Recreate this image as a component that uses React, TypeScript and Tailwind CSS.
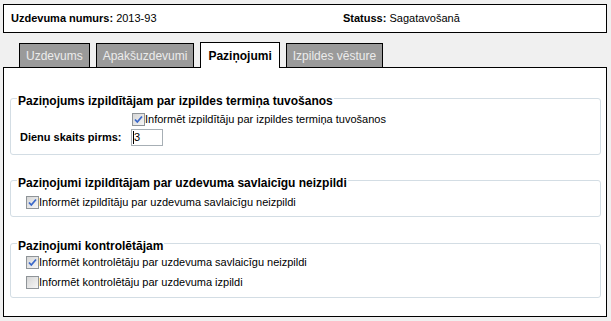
import React from "react";

const Checkbox = ({ checked }: { checked: boolean }) => (
  <span className="inline-flex w-[13px] h-[13px] shrink-0 border border-[#8f9498] bg-gradient-to-br from-[#d6d6d6] to-[#f6f6f6] items-center justify-center">
    {checked && (
      <svg width="11" height="11" viewBox="0 0 11 11">
        <path d="M2 5.5 L4.3 8 L9 2.5" fill="none" stroke="#3b68c9" strokeWidth="1.8" />
      </svg>
    )}
  </span>
);

const Row = ({ checked, text, className = "" }: { checked: boolean; text: string; className?: string }) => (
  <div className={`flex items-center h-[16px] ${className}`}>
    <Checkbox checked={checked} />
    <span className="text-[11px] leading-[13px] text-black">{text}</span>
  </div>
);

const Legend = ({ text }: { text: string }) => (
  <div className="-mt-[5px] ml-[-3px] w-fit bg-white px-[1px] text-[12px] leading-[14px] font-bold text-black">
    {text}
  </div>
);

export default function App() {
  return (
    <div
      className="w-[611px] h-[321px] bg-[#f0f0f0] pt-[4px] px-[3px] overflow-hidden"
      style={{ fontFamily: '"Liberation Sans", Arial, sans-serif' }}
    >
      <div className="h-[29px] w-[604px] border border-black bg-white flex items-center pl-[7px] text-[11px] text-black">
        <div className="w-[332px]">
          <span className="font-bold">Uzdevuma numurs:</span> 2013-93
        </div>
        <div>
          <span className="font-bold">Statuss:</span> Sagatavošanā
        </div>
      </div>

      <div className="h-[34px] flex items-end pl-[16px] gap-[6px]">
        <div className="h-[24px] border border-b-0 border-black bg-[#9a9a9a] px-[6px] flex items-center text-[12px] text-[#ececec]">
          Uzdevums
        </div>
        <div className="h-[24px] border border-b-0 border-black bg-[#9a9a9a] px-[6px] flex items-center text-[12px] text-[#ececec]">
          Apakšuzdevumi
        </div>
        <div className="relative z-10 h-[26px] -mb-[1px] border border-b-0 border-black bg-white px-[7px] flex items-center text-[12px] font-bold text-black">
          Paziņojumi
        </div>
        <div className="h-[24px] border border-b-0 border-black bg-[#9a9a9a] px-[6px] flex items-center text-[12px] text-[#ececec]">
          Izpildes vēsture
        </div>
      </div>

      <div className="h-[250px] w-[604px] border border-black bg-white pl-[6px] pr-[5px] pt-[30px]">
        <div className="h-[57px] border border-[#d3dde4] rounded-[3px] pl-[9px]">
          <Legend text="Paziņojums izpildītājam par izpildes termiņa tuvošanos" />
          <div className="grid grid-cols-[111px_1fr] mt-[3px]">
            <div />
            <Row checked text="Informēt izpildītāju par izpildes termiņa tuvošanos" className="ml-[1px]" />
            <div className="mt-[2px] h-[17px] flex items-center text-[11px] font-bold text-black">Dienu skaits pirms:</div>
            <div className="mt-[2px] h-[17px] w-[32px] border border-[#a7afb5] flex items-center pl-[1px] text-[11px] text-black">
              <span className="w-[1px] h-[13px] bg-black" />
              <span>3</span>
            </div>
          </div>
        </div>

        <div className="mt-[25px] h-[37px] border border-[#d3dde4] rounded-[3px] pl-[9px]">
          <Legend text="Paziņojumi izpildītājam par uzdevuma savlaicīgu neizpildi" />
          <Row checked text="Informēt izpildītāju par uzdevuma savlaicīgu neizpildi" className="mt-[4px] ml-[6px]" />
        </div>

        <div className="mt-[26px] h-[55px] border border-[#d3dde4] rounded-[3px] pl-[9px]">
          <Legend text="Paziņojumi kontrolētājam" />
          <Row checked text="Informēt kontrolētāju par uzdevuma savlaicīgu neizpildi" className="mt-[1px] ml-[6px]" />
          <Row checked={false} text="Informēt kontrolētāju par uzdevuma izpildi" className="mt-[4px] ml-[6px]" />
        </div>
      </div>
    </div>
  );
}
